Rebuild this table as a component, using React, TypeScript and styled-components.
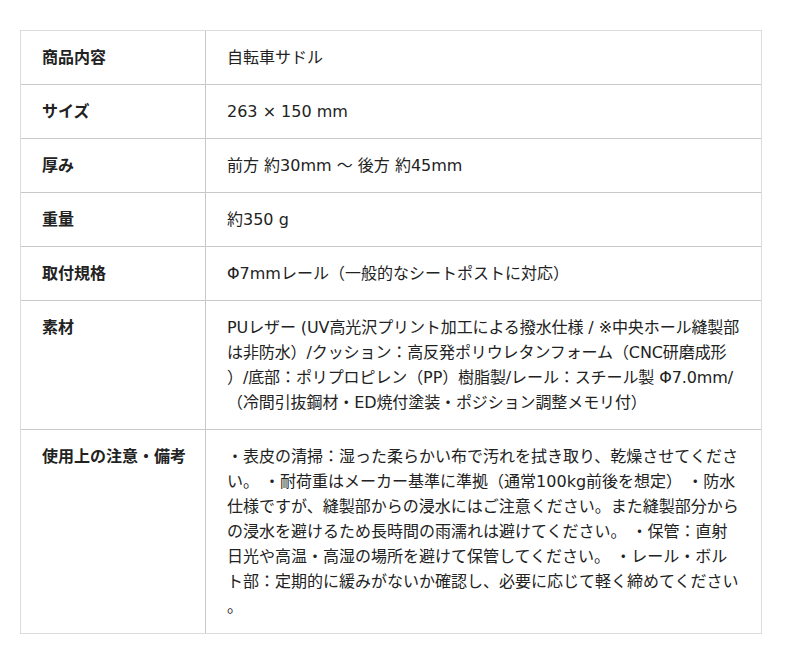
import styled, { createGlobalStyle } from 'styled-components';

const GlobalStyle = createGlobalStyle`
  html, body {
    margin: 0;
    padding: 0;
    background: #ffffff;
  }
  body {
    font-family: "DejaVu Sans", "Noto Sans CJK JP", sans-serif;
    color: #222;
  }
`;

const Page = styled.div`
  padding: 30px 38px 30px 20px;
`;

const SpecTable = styled.table`
  width: 742px;
  border: 1px solid #dcdcdc;
  border-collapse: separate;
  border-spacing: 0;
  table-layout: fixed;
  font-family: "DejaVu Sans", "Noto Sans CJK JP", sans-serif;
  font-size: 16px;
  line-height: 25px;
  color: #222;
`;

const Row = styled.tr<{ $last?: boolean }>`
  & > th,
  & > td {
    border-bottom: ${(p) => (p.$last ? 'none' : '1px solid #c8c8c8')};
  }
`;

const Label = styled.th`
  width: 185px;
  box-sizing: border-box;
  padding: 14px 20px 14px 21px;
  border-right: 1px solid #c8c8c8;
  text-align: left;
  vertical-align: top;
  font-weight: bold;
  white-space: nowrap;
`;

const Value = styled.td<{ $tight?: boolean }>`
  padding: 14px 19px 14px 21px;
  text-align: left;
  vertical-align: top;
  line-break: anywhere;
  text-spacing-trim: space-all;
  letter-spacing: ${(p) => (p.$tight ? '-0.1px' : 'normal')};
`;

const specs: { label: string; value: string; tight?: boolean }[] = [
  { label: '商品内容', value: '自転車サドル' },
  { label: 'サイズ', value: '263 × 150 mm' },
  { label: '厚み', value: '前方 約30mm 〜 後方 約45mm' },
  { label: '重量', value: '約350 g' },
  { label: '取付規格', value: 'Φ7mmレール（一般的なシートポストに対応）' },
  {
    label: '素材',
    tight: true,
    value:
      'PUレザー (UV高光沢プリント加工による撥水仕様 / ※中央ホール縫製部は非防水）/クッション：高反発ポリウレタンフォーム（CNC研磨成形）/底部：ポリプロピレン（PP）樹脂製/レール：スチール製 Φ7.0mm/（冷間引抜鋼材・ED焼付塗装・ポジション調整メモリ付）',
  },
  {
    label: '使用上の注意・備考',
    value:
      '・表皮の清掃：湿った柔らかい布で汚れを拭き取り、乾燥させてください。 ・耐荷重はメーカー基準に準拠（通常100kg前後を想定） ・防水仕様ですが、縫製部からの浸水にはご注意ください。また縫製部分からの浸水を避けるため長時間の雨濡れは避けてください。 ・保管：直射日光や高温・高湿の場所を避けて保管してください。 ・レール・ボルト部：定期的に緩みがないか確認し、必要に応じて軽く締めてください。',
  },
];

export default function App() {
  return (
    <Page>
      <GlobalStyle />
      <SpecTable>
        <tbody>
          {specs.map((s, i) => (
            <Row key={s.label} $last={i === specs.length - 1}>
              <Label>{s.label}</Label>
              <Value $tight={s.tight}>{s.value}</Value>
            </Row>
          ))}
        </tbody>
      </SpecTable>
    </Page>
  );
}
